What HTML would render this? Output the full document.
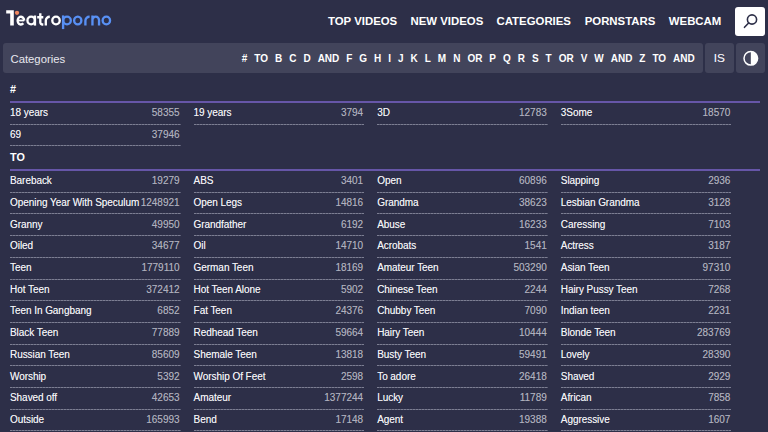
<!DOCTYPE html>
<html><head><meta charset="utf-8">
<style>
*{margin:0;padding:0;box-sizing:border-box}
html,body{width:768px;height:432px;overflow:hidden;background:#2d2f48;font-family:"Liberation Sans",sans-serif;color:#fff}
.logo{position:absolute;left:0;top:0;display:block}
.nav{position:absolute;top:15px;left:0;font-weight:bold;font-size:11.4px;white-space:nowrap;line-height:13px}
.nav span{position:absolute;top:0}
.search{position:absolute;left:735px;top:7px;width:30px;height:29px;background:#fff;border-radius:3px}
.search svg{display:block}
.bar{position:absolute;left:3px;top:43.3px;width:700px;height:30px;background:#42445b;border-radius:3px}
.bar .t{position:absolute;left:7.5px;top:9.5px;font-size:11.3px;color:#e8e8ee;line-height:13px}
.letters{position:absolute;top:9.4px;left:238.8px;font-size:10px;font-weight:bold;white-space:nowrap;line-height:12px}
.letters span{margin-right:6.98px}
.btn{position:absolute;top:43.3px;width:29px;height:30px;background:#42445b;border-radius:3px}
.btn svg{display:block}
.is{position:absolute;left:8.8px;top:8.7px;font-size:11.8px;color:#f0f0f4;line-height:13px;text-shadow:0 0 .5px rgba(240,240,244,.6)}
.sec{position:absolute;left:10px;width:760px}
.sh{font-weight:bold;font-size:10.8px;height:18px;line-height:9px;width:750px;border-bottom:2px solid #6656a8}
ul{list-style:none;position:relative;width:760px}
li{float:left;width:170.6px;margin-right:13px;height:21.71px;font-size:10px;position:relative;line-height:12px}
li .n{position:absolute;left:0;top:4.2px;font-size:10px;letter-spacing:-0.055px;color:#f2f2f5;text-shadow:0 0 0.5px rgba(242,242,245,.6)}
li .c{position:absolute;right:1px;top:4.2px;font-size:10px;color:#afb0bd;text-shadow:0 0 .4px rgba(175,176,189,.5)}
li::after{content:"";position:absolute;left:0;right:0;bottom:0;height:1px;background:repeating-linear-gradient(90deg,#7c7e92 0 2px,#5c5e74 2px 3px)}

</style></head><body>
<svg class="logo" width="120" height="40" viewBox="0 0 120 40"><path d="M6.2 10.2H13.8V25.6H10.2V13.6H6.2Z" fill="#fff"/><circle cx="17" cy="12.8" r="2.15" fill="#f0875f"/><g fill="none" stroke="#fff" stroke-width="2.35"><path d="M17.6 20.5H24.2" stroke-width="1.8"/><path d="M24.2 20.5A3.3 3.85 0 1 0 23.3 23.3"/><ellipse cx="31.15" cy="20.5" rx="3.7" ry="3.85"/><path d="M34.95 15.5V25.6"/><path d="M40.3 13.3V22.3A2.2 2.2 0 0 0 42.5 24.5H43.3M37.2 17.2H43.3"/><path d="M45.8 25.6V20.8A3.9 3.9 0 0 1 49.8 16.8"/><ellipse cx="56" cy="20.5" rx="3.7" ry="3.85"/></g><g fill="none" stroke="#5890f4" stroke-width="2.35"><path d="M63.1 15.4V29.1"/><ellipse cx="67" cy="20.5" rx="3.8" ry="3.85"/><ellipse cx="77.75" cy="20.5" rx="3.6" ry="3.85"/><path d="M85.4 25.6V20.8A3.9 3.9 0 0 1 89.6 16.8"/><path d="M92.45 15.4V25.6M92.45 20.3A3.3 3.7 0 0 1 99.05 20.3V25.6"/><ellipse cx="106.35" cy="20.5" rx="3.7" ry="3.85"/></g></svg>
<div class="nav"><span style="left:328px">TOP VIDEOS</span><span style="left:410.5px">NEW VIDEOS</span><span style="left:496.5px">CATEGORIES</span><span style="left:584.7px">PORNSTARS</span><span style="left:668.8px">WEBCAM</span></div>
<div class="search"><svg width="30" height="29" viewBox="0 0 30 29"><circle cx="17" cy="12.5" r="4.6" fill="none" stroke="#2d2f48" stroke-width="1.6"/><line x1="13.6" y1="16" x2="9.5" y2="20.3" stroke="#2d2f48" stroke-width="1.6" stroke-linecap="round"/></svg></div>
<div class="bar"><div class="t">Categories</div><div class="letters"><span>#</span><span>TO</span><span>B</span><span>C</span><span>D</span><span>AND</span><span>F</span><span>G</span><span>H</span><span>I</span><span>J</span><span>K</span><span>L</span><span>M</span><span>N</span><span>OR</span><span>P</span><span>Q</span><span>R</span><span>S</span><span>T</span><span>OR</span><span>V</span><span>W</span><span>AND</span><span>Z</span><span>TO</span><span>AND</span></div></div>
<div class="btn" style="left:705px"><span class="is">IS</span></div>
<div class="btn" style="left:736px"><svg width="29" height="30" viewBox="0 0 29 30"><circle cx="14.8" cy="15.3" r="6.8" fill="none" stroke="#fff" stroke-width="1.5"/><path d="M14.8 8.5 A6.8 6.8 0 0 1 14.8 22.1 Z" fill="#fff"/></svg></div>
<div class="sec" style="top:85px"><div class="sh">#</div><ul><li><span class="n">18 years</span><span class="c">58355</span></li>
<li><span class="n">19 years</span><span class="c">3794</span></li>
<li><span class="n">3D</span><span class="c">12783</span></li>
<li><span class="n">3Some</span><span class="c">18570</span></li>
<li><span class="n">69</span><span class="c">37946</span></li></ul></div>
<div class="sec" style="top:153px"><div class="sh">TO</div><ul><li><span class="n">Bareback</span><span class="c">19279</span></li>
<li><span class="n">ABS</span><span class="c">3401</span></li>
<li><span class="n">Open</span><span class="c">60896</span></li>
<li><span class="n">Slapping</span><span class="c">2936</span></li>
<li><span class="n">Opening Year With Speculum</span><span class="c">1248921</span></li>
<li><span class="n">Open Legs</span><span class="c">14816</span></li>
<li><span class="n">Grandma</span><span class="c">38623</span></li>
<li><span class="n">Lesbian Grandma</span><span class="c">3128</span></li>
<li><span class="n">Granny</span><span class="c">49950</span></li>
<li><span class="n">Grandfather</span><span class="c">6192</span></li>
<li><span class="n">Abuse</span><span class="c">16233</span></li>
<li><span class="n">Caressing</span><span class="c">7103</span></li>
<li><span class="n">Oiled</span><span class="c">34677</span></li>
<li><span class="n">Oil</span><span class="c">14710</span></li>
<li><span class="n">Acrobats</span><span class="c">1541</span></li>
<li><span class="n">Actress</span><span class="c">3187</span></li>
<li><span class="n">Teen</span><span class="c">1779110</span></li>
<li><span class="n">German Teen</span><span class="c">18169</span></li>
<li><span class="n">Amateur Teen</span><span class="c">503290</span></li>
<li><span class="n">Asian Teen</span><span class="c">97310</span></li>
<li><span class="n">Hot Teen</span><span class="c">372412</span></li>
<li><span class="n">Hot Teen Alone</span><span class="c">5902</span></li>
<li><span class="n">Chinese Teen</span><span class="c">2244</span></li>
<li><span class="n">Hairy Pussy Teen</span><span class="c">7268</span></li>
<li><span class="n">Teen In Gangbang</span><span class="c">6852</span></li>
<li><span class="n">Fat Teen</span><span class="c">24376</span></li>
<li><span class="n">Chubby Teen</span><span class="c">7090</span></li>
<li><span class="n">Indian teen</span><span class="c">2231</span></li>
<li><span class="n">Black Teen</span><span class="c">77889</span></li>
<li><span class="n">Redhead Teen</span><span class="c">59664</span></li>
<li><span class="n">Hairy Teen</span><span class="c">10444</span></li>
<li><span class="n">Blonde Teen</span><span class="c">283769</span></li>
<li><span class="n">Russian Teen</span><span class="c">85609</span></li>
<li><span class="n">Shemale Teen</span><span class="c">13818</span></li>
<li><span class="n">Busty Teen</span><span class="c">59491</span></li>
<li><span class="n">Lovely</span><span class="c">28390</span></li>
<li><span class="n">Worship</span><span class="c">5392</span></li>
<li><span class="n">Worship Of Feet</span><span class="c">2598</span></li>
<li><span class="n">To adore</span><span class="c">26418</span></li>
<li><span class="n">Shaved</span><span class="c">2929</span></li>
<li><span class="n">Shaved off</span><span class="c">42653</span></li>
<li><span class="n">Amateur</span><span class="c">1377244</span></li>
<li><span class="n">Lucky</span><span class="c">11789</span></li>
<li><span class="n">African</span><span class="c">7858</span></li>
<li><span class="n">Outside</span><span class="c">165993</span></li>
<li><span class="n">Bend</span><span class="c">17148</span></li>
<li><span class="n">Agent</span><span class="c">19388</span></li>
<li><span class="n">Aggressive</span><span class="c">1607</span></li></ul></div>
</body></html>
